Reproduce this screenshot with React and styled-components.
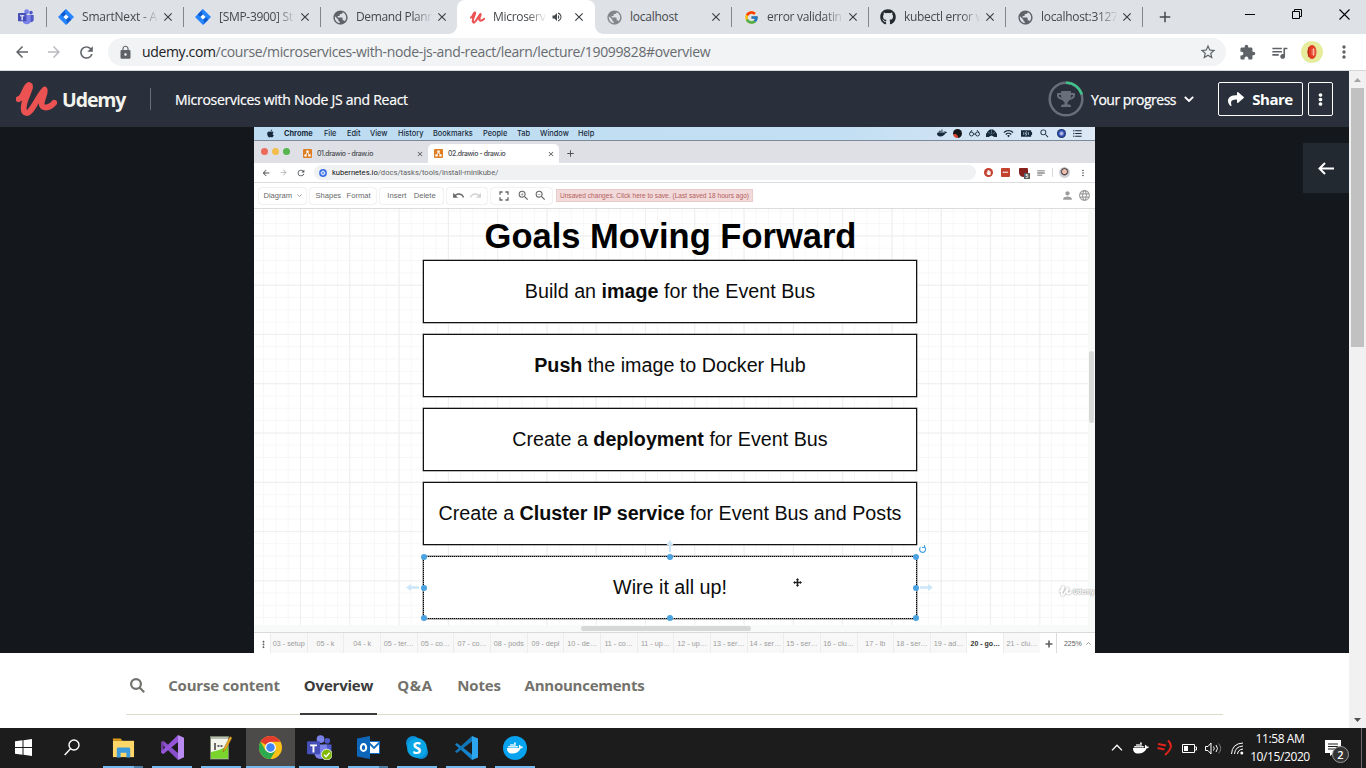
import React from "react";
import styled, { createGlobalStyle, css } from "styled-components";
import { FcGoogle } from "react-icons/fc";
import { FaGithub, FaTrophy, FaShare, FaEllipsisV, FaDocker, FaApple, FaHandPaper } from "react-icons/fa";
import {
  MdPublic, MdVolumeUp, MdClose, MdAdd, MdArrowBack, MdArrowForward, MdRefresh, MdLock, MdStarBorder,
  MdExtension, MdQueueMusic, MdMoreVert, MdUndo, MdRedo, MdFullscreen, MdZoomIn, MdZoomOut, MdPerson,
  MdLanguage, MdWifi, MdSearch, MdNotes, MdFormatListBulleted,
} from "react-icons/md";

const UI = '"Open Sans", "Noto Sans", sans-serif';
const HELV = '"Liberation Sans", Arial, sans-serif';

const Global = createGlobalStyle`
  * { box-sizing: border-box; }
  body { margin: 0; background: #fff; font-family: ${UI}; overflow: hidden; }
  svg { display: block; flex: none; }
`;

const Screen = styled.div`
  width: 1366px;
  height: 768px;
  display: flex;
  flex-direction: column;
  overflow: hidden;
`;

/* ---------- Browser chrome ---------- */
const TabStrip = styled.div`
  height: 34px;
  flex: none;
  display: flex;
  background: #dee1e6;
  color: #45494d;
`;
const PinnedTab = styled.div`
  width: 46px;
  padding: 9px 0 0 18px;
`;
const Tab = styled.div`
  position: relative;
  width: 137px;
  height: 34px;
  flex: none;
  display: flex;
  align-items: center;
  padding: 0 8px 0 11px;
  ${(p) => p.$divider && css`
    &::before {
      content: "";
      position: absolute;
      left: 0;
      top: 7px;
      width: 1px;
      height: 20px;
      background: #83868b;
    }
  `}
  ${(p) => p.$active && css`
    background: #fff;
    border-radius: 8px 8px 0 0;
    width: 138px;
    margin-right: -1px;
    padding-right: 9px;
    z-index: 1;
    &::before, &::after {
      content: "";
      position: absolute;
      bottom: 0;
      width: 8px;
      height: 8px;
    }
    &::before { left: -8px; background: radial-gradient(circle at 0 0, transparent 7.5px, #fff 8px); }
    &::after { right: -8px; background: radial-gradient(circle at 100% 0, transparent 7.5px, #fff 8px); }
  `}
`;
const TabIcon = styled.span`
  width: 18px;
  margin-right: 7px;
  display: flex;
  justify-content: center;
  color: ${(p) => p.$color || "#5f6368"};
`;
const TabTitle = styled.span`
  flex: 1;
  min-width: 0;
  overflow: hidden;
  white-space: nowrap;
  font-size: 12px;
  line-height: 16px;
  letter-spacing: ${(p) => p.$track || -0.3}px;
  ${(p) => p.$fade && css`mask-image: linear-gradient(90deg, #000 calc(100% - 20px), transparent);`}
`;
const TabClose = styled.span`
  margin-left: 2px;
  color: #3c4043;
`;
const Sound = styled.span`
  margin: 0 7px 0 4px;
`;
const NewTab = styled.div`
  width: 85px;
  padding: 8px 0 0 14px;
  position: relative;
  &::before {
    content: "";
    position: absolute;
    left: 0;
    top: 7px;
    width: 1px;
    height: 20px;
    background: #83868b;
  }
`;
const WindowControls = styled.div`
  flex: 1;
  display: flex;
  padding: 9px 0 0 18px;
  gap: 36px;
`;

const AddressRow = styled.div`
  height: 37px;
  flex: none;
  display: flex;
  align-items: center;
  padding: 0 0 0 13px;
  background: #fff;
  border-bottom: 1px solid #d5d7da;
  color: #5f6368;
`;
const NavButtons = styled.div`
  width: 95px;
  display: flex;
  gap: 14px;
`;
const Omnibox = styled.div`
  width: 1118px;
  height: 28px;
  border-radius: 14px;
  background: #f1f3f4;
  display: flex;
  align-items: center;
  padding: 0 9px 0 10px;
`;
const Url = styled.span`
  flex: 1;
  margin-left: 9px;
  font-size: 14px;
  line-height: 18px;
  letter-spacing: -0.35px;
  color: #686c71;
  white-space: nowrap;
  b { font-weight: 400; color: #202124; }
`;
const BrowserActions = styled.div`
  display: flex;
  align-items: center;
  margin-left: 13px;
`;
const MediaControl = styled.span`
  margin-left: 14px;
`;
const Avatar = styled.div`
  width: 22px;
  height: 22px;
  margin: 0 11px 0 12px;
  border-radius: 50%;
  background: #e6ec9c;
  display: flex;
  align-items: center;
  justify-content: center;
`;

/* ---------- Course page ---------- */
const Viewport = styled.div`
  height: 657px;
  flex: none;
  display: flex;
`;
const Page = styled.div`
  width: 1349px;
  display: flex;
  flex-direction: column;
`;
const Scrollbar = styled.div`
  width: 17px;
  background: #f1f1f1;
  display: flex;
  flex-direction: column;
  align-items: center;
`;
const ScrollArrow = styled.div`
  height: 17px;
  display: flex;
  align-items: center;
`;
const ScrollThumb = styled.div`
  width: 13px;
  height: 259px;
  background: #c1c1c1;
  margin-bottom: auto;
`;
const CourseHeader = styled.header`
  height: 56px;
  flex: none;
  background: #29303b;
  display: flex;
  align-items: center;
  padding: 0 16px;
  color: #fff;
`;
const Brand = styled.div`
  width: 134px;
  display: flex;
  align-items: center;
  color: #f4f4ee;
  font-size: 19.5px;
  font-weight: 700;
  letter-spacing: -1.1px;
  span { margin: 0 0 0 5px; }
`;
const HeaderRule = styled.div`
  width: 1px;
  height: 22px;
  background: #686f7a;
  margin-right: 24px;
`;
const CourseTitle = styled.div`
  flex: 1;
  font-size: 14px;
  letter-spacing: -0.28px;
  padding-top: 1px;
  -webkit-text-stroke: 0.2px #fff;
`;
const Progress = styled.div`
  display: flex;
  align-items: center;
  font-size: 14px;
  letter-spacing: -0.5px;
  -webkit-text-stroke: 0.25px #fff;
  > svg { margin-left: 8px; }
`;
const ProgressRing = styled.div`
  position: relative;
  width: 36px;
  height: 36px;
  margin-right: 7px;
  color: #686f7a;
`;
const Trophy = styled(FaTrophy)`
  position: absolute;
  left: 9px;
  top: 9px;
`;
const OutlineButton = styled.button`
  width: ${(p) => p.$w}px;
  height: 34px;
  margin-left: ${(p) => p.$gap}px;
  padding: 0;
  border: 1px solid #fff;
  border-radius: 2px;
  background: none;
  color: #fff;
  font: 700 15px ${UI};
  letter-spacing: -0.5px;
  display: flex;
  align-items: center;
  justify-content: center;
  gap: 8px;
`;
const Stage = styled.div`
  height: 526px;
  flex: none;
  background: #14171c;
  display: flex;
  padding-left: 254px;
`;
const SidebarToggle = styled.div`
  width: 46px;
  height: 50px;
  margin: 16px 0 0 208px;
  background: #232930;
  display: flex;
  align-items: center;
  justify-content: center;
`;
const CourseTabs = styled.nav`
  height: 62px;
  width: 1097px;
  margin-left: 126px;
  border-bottom: 1px solid #dcdacb;
  display: flex;
  align-items: stretch;
`;
const SearchCell = styled.div`
  width: 38px;
  padding: 25px 0 0 4px;
`;
const CourseTab = styled.div`
  width: ${(p) => p.$w}px;
  margin-right: 16px;
  padding-top: 21px;
  text-align: center;
  white-space: nowrap;
  font-size: 15px;
  line-height: 22px;
  font-weight: 700;
  letter-spacing: ${(p) => p.$track || -0.2}px;
  color: ${(p) => (p.$active ? "#3b3b3b" : "#73726c")};
  margin-bottom: -1px;
  border-bottom: ${(p) => (p.$active ? "2px solid #3b3b3b" : "0")};
`;

/* ---------- Lecture video ---------- */
const Video = styled.div`
  width: 841px;
  height: 526px;
  display: flex;
  flex-direction: column;
  background: #fff;
  font-family: ${HELV};
  overflow: hidden;
`;
const MacBar = styled.div`
  height: 14px;
  flex: none;
  display: flex;
  align-items: center;
  padding: 0 12px 1px;
  background: linear-gradient(90deg, #bddcf1, #c3dff3 70%, #dde8f5);
  border-bottom: 1px solid #7c8a9a;
  color: #172a3c;
  font: 500 7.4px Inter, ${HELV};
`;
const MacMenu = styled.span`
  width: ${(p) => p.$w}px;
  white-space: nowrap;
  font-weight: ${(p) => (p.$bold ? 700 : 500)};
`;
const MacTray = styled.div`
  flex: 1;
  display: flex;
  align-items: center;
  justify-content: flex-end;
  gap: 6.4px;
`;
const Siri = styled.span`
  width: 9px;
  height: 9px;
  border-radius: 50%;
  background: radial-gradient(circle, #d4c6e8 10%, #3659bb 40%, #101f53 75%);
`;
const ObsDot = styled.span`
  width: 9px;
  height: 9px;
  border-radius: 50%;
  background: radial-gradient(circle at 20% 90%, #d5432e 25%, #17171a 32%);
`;
const VTabs = styled.div`
  height: 22px;
  flex: none;
  display: flex;
  align-items: flex-end;
  background: #dee0e5;
`;
const Lights = styled.div`
  width: 43px;
  height: 23px;
  padding: 8px 0 0 7px;
  display: flex;
  gap: 4px;
`;
const Light = styled.i`
  width: 7px;
  height: 7px;
  border-radius: 50%;
  background: ${(p) => p.$c};
`;
const VTab = styled.div`
  width: 131px;
  height: 19px;
  display: flex;
  align-items: center;
  gap: 5px;
  padding: 0 4px 0 6px;
  border-radius: 5px 5px 0 0;
  background: ${(p) => (p.$active ? "#fff" : "transparent")};
  font: 500 6.9px Inter, ${HELV};
  letter-spacing: -0.35px;
  color: #4a4d52;
  span { flex: 1; }
`;
const VAddress = styled.div`
  height: 20px;
  flex: none;
  display: flex;
  align-items: center;
  padding: 0 0 0 7px;
  border-bottom: 1px solid #dadcdd;
  color: #4d5054;
  gap: 8px;
`;
const VOmnibox = styled.div`
  width: 662px;
  height: 15px;
  flex: none;
  display: flex;
  align-items: center;
  gap: 5px;
  padding-left: 5px;
  border-radius: 8px;
  background: #f0f1f3;
  font: 400 7.6px Roboto, ${HELV};
  color: #606266;
  b { font-weight: 400; color: #111214; }
`;
const VExtensions = styled.div`
  display: flex;
  align-items: center;
  gap: 8px;
`;
const Badge = styled.span`
  width: 9px;
  height: 9px;
  background: #c4402e;
  border-radius: ${(p) => (p.$round ? "50%" : "1px")};
  color: #fff;
  font: 700 5px/9px ${HELV};
  display: flex;
  align-items: center;
  justify-content: center;
`;
const Shield = styled.span`
  position: relative;
  width: 9px;
  height: 9px;
  margin-left: 1px;
  border-radius: 1px 1px 5px 5px;
  background: #85201c;
  &::after {
    content: "5";
    position: absolute;
    left: 5px;
    top: 5px;
    width: 6px;
    height: 6px;
    background: #5b5d5f;
    color: #fff;
    font: 700 5px/6px ${HELV};
    text-align: center;
  }
`;
const Divider = styled.i`
  width: 1px;
  height: 9px;
  margin: 0 -2px;
  background: #d7d8da;
`;
const Portrait = styled.span`
  width: 11px;
  height: 11px;
  border-radius: 50%;
  background: radial-gradient(circle at 50% 42%, #e9bfb0 25%, #4a3638 33%, #cfd3d8 52%);
`;
const DrawBar = styled.div`
  height: 26px;
  flex: none;
  display: flex;
  align-items: center;
  padding: 0 4px 0 5px;
  border-bottom: 1px solid #dcdcdc;
  color: #686868;
  font-size: 7.6px;
`;
const DrawGroup = styled.div`
  width: ${(p) => p.$w}px;
  height: 16px;
  margin-right: 4px;
  border-radius: 2px;
  box-shadow: 0 0 1.5px #bcbcbc;
  display: flex;
  align-items: center;
  justify-content: space-evenly;
`;
const Notice = styled.div`
  height: 13px;
  width: 197px;
  flex: none;
  background: #f1dad9;
  border: 1px solid #e9cbca;
  color: #b4605e;
  font-size: 6.6px;
  line-height: 11px;
  text-align: center;
  white-space: nowrap;
`;
const AccountIcons = styled.div`
  margin-left: auto;
  display: flex;
  align-items: center;
  gap: 4px;
  color: #9c9c9c;
`;
const CanvasArea = styled.div`
  height: 424px;
  flex: none;
  display: grid;
  grid-template: 416px 8px / 834px 7px;
  background: #f8f9f9;
  border-bottom: 1px solid #dadada;
`;
const Canvas = styled.div`
  display: flex;
  flex-direction: column;
  align-items: center;
  padding-right: 2px;
  background-color: #fff;
  background-image:
    linear-gradient(90deg, #eeeeee 1px, transparent 1px),
    linear-gradient(#eeeeee 1px, transparent 1px),
    linear-gradient(90deg, #f7f7f7 1px, transparent 1px),
    linear-gradient(#f7f7f7 1px, transparent 1px);
  background-size: 49.3px 49.3px, 49.3px 49.3px, 12.325px 12.325px, 12.325px 12.325px;
  background-position: 46px 26.4px;
`;
const Heading = styled.h1`
  height: 51px;
  flex: none;
  margin: 0;
  padding: 6px 0 0 1px;
  font-size: 34.5px;
  line-height: 43px;
  font-weight: 700;
  color: #000;
  white-space: nowrap;
`;
const Goals = styled.div`
  flex: none;
`;
const Goal = styled.div`
  position: relative;
  width: 494px;
  height: 63px;
  margin-bottom: 11px;
  flex: none;
  background: #fff;
  border: 1px solid #111;
  box-shadow: 0 0 0 0.5px #777;
  ${(p) => p.$selected && css`
    border: 1px solid #8a8a8a;
    outline: 1px dotted #000;
    outline-offset: -1px;
  `}
  display: flex;
  align-items: center;
  justify-content: center;
  padding-bottom: 1px;
  font-size: 19.72px;
  color: #0c0c0c;
  white-space: pre;
`;
const Handle = styled.i`
  position: absolute;
  width: 6px;
  height: 6px;
  margin: -3px;
  border-radius: 50%;
  background: #4aa3e0;
  left: ${(p) => p.$x}%;
  top: ${(p) => p.$y}%;
`;
const Overlay = styled.span`
  position: absolute;
  left: ${(p) => p.$x}px;
  top: ${(p) => p.$y}px;
`;
const Watermark = styled.span`
  position: absolute;
  left: 635px;
  top: 29px;
  display: flex;
  align-items: center;
  gap: 1px;
  color: #fff;
  font: 700 6.5px ${UI};
  letter-spacing: -0.4px;
  text-shadow: 0 0 2px #8a8a8a, 0 0 1px #999;
  svg { filter: drop-shadow(0 0 1px #999); }
`;
const VScroll = styled.div`
  padding: 142px 0 0 1px;
  &::before {
    content: "";
    display: block;
    width: 5px;
    height: 72px;
    border-radius: 3px;
    background: #d8d9d9;
  }
`;
const HScroll = styled.div`
  padding: 1px 0 0 327px;
  &::before {
    content: "";
    display: block;
    width: 170px;
    height: 5px;
    border-radius: 3px;
    background: #d6d7d7;
  }
`;
const SheetBar = styled.div`
  height: 20px;
  flex: none;
  display: flex;
  color: #606060;
  font-size: 7.5px;
  line-height: 21px;
`;
const SheetMenu = styled.div`
  width: 16px;
  padding: 6px 0 0 4px;
`;
const Sheet = styled.div`
  width: 36.67px;
  flex: none;
  text-align: center;
  background: ${(p) => (p.$active ? "#fff" : "#f8f8f8")};
  border-left: 1px solid #ececec;
  color: ${(p) => (p.$active ? "#333" : "#9b9b9b")};
  font-weight: ${(p) => (p.$active ? 700 : 400)};
  font-size: ${(p) => (p.$active ? 7 : 7.2)}px;
  white-space: nowrap;
`;
const SheetAdd = styled.div`
  width: 17px;
  padding: 7px 0 0 5px;
  border-right: 1px solid #dcdcdc;
`;
const Zoom = styled.div`
  flex: 1;
  display: flex;
  align-items: center;
  justify-content: center;
  gap: 4px;
  padding: 1px 0 0 3px;
  font-size: 7px;
`;

/* ---------- Taskbar ---------- */
const Taskbar = styled.footer`
  height: 40px;
  flex: none;
  display: flex;
  background: #1d1c1c;
  color: #fff;
`;
const TaskSlot = styled.div`
  width: ${(p) => p.$w || 49}px;
  height: 40px;
  display: flex;
  align-items: center;
  justify-content: center;
  padding: 0 ${(p) => p.$inset || 1}px 1px 0;
`;
const TaskApp = styled(TaskSlot)`
  position: relative;
  background: ${(p) => (p.$active ? "#4c4b4a" : "transparent")};
  &::after {
    content: "";
    position: absolute;
    bottom: 0;
    left: ${(p) => (p.$active ? 0 : 4)}px;
    right: ${(p) => (p.$active ? 0 : 5)}px;
    height: 2px;
    background: ${(p) => (p.$stack ? "linear-gradient(90deg, #76b9ed 31px, #4d7ea6 31px)" : "#76b9ed")};
  }
`;
const Tray = styled.div`
  margin-left: auto;
  display: flex;
  align-items: center;
`;
const TrayItem = styled.div`
  width: 24.2px;
  display: flex;
  justify-content: center;
`;
const Clock = styled.div`
  width: 62px;
  text-align: center;
  font-size: 12px;
  line-height: 18px;
  letter-spacing: -0.4px;
  white-space: nowrap;
  padding-bottom: 1px;
  margin: 0 1px 0 -1px;
`;
const Notifications = styled.div`
  position: relative;
  width: 49px;
  padding-left: 13px;
`;
const Count = styled.span`
  position: absolute;
  left: 20px;
  top: 6px;
  width: 17px;
  height: 17px;
  border-radius: 50%;
  border: 1px solid #999;
  background: #333;
  font-size: 11px;
  font-weight: 600;
  line-height: 15px;
  text-align: center;
`;
const DesktopEdge = styled.div`
  width: 5px;
  height: 40px;
  border-left: 1px solid #6a6a6a;
`;

/* ---------- Drawings ---------- */
const Jira = () => (
  <svg width="16" height="16" viewBox="0 0 16 16">
    <path d="M8 0l8 8-8 8-8-8z" fill="#2684ff" />
    <path d="M8 0c-1.6 2-1.4 3.8 0 5.3L5.3 8 2.6 5.4zM8 16c1.6-2 1.4-3.8 0-5.3L10.7 8l2.7 2.6z" fill="#0f5bd0" />
    <path d="M8 5.4L10.6 8 8 10.6 5.4 8z" fill="#fff" />
  </svg>
);
const Teams = ({ size = 16, check }) => (
  <svg width={size} height={size} viewBox="0 0 24 24">
    <circle cx="19.5" cy="5.5" r="2.7" fill="#5059c9" />
    <circle cx="13" cy="4" r="3.7" fill="#7b83eb" />
    <path d="M16 9h7.5v7a4 4 0 0 1-5.5 3.6z" fill="#5059c9" />
    <path d="M7 9h12v8a6 6 0 0 1-12 0z" fill="#7b83eb" />
    <rect x="0" y="6" width="12.5" height="12.5" rx="1" fill="#464eb8" />
    <path d="M3 9.2h6.5v1.7H7.1v6H5.3v-6H3z" fill="#fff" />
    {check && (
      <>
        <circle cx="19" cy="18.8" r="5.2" fill="#80b900" stroke="#f5f5f5" strokeWidth=".8" />
        <path d="M16.4 19l1.9 1.9 3.4-3.9" fill="none" stroke="#fff" strokeWidth="1.4" />
      </>
    )}
  </svg>
);
const UdemyMark = ({ w = 41, h = 34, color = "#ec5252" }) => (
  <svg width={w} height={h} viewBox="0 0 41 34">
    <path
      d="M2.6 17.2C8 16 8.5 5 13 3c3.4 1.2-2.5 10-4.6 18C7 27 7.6 30.5 10.6 31 16 31 22 14 28.6 7.6c1.6 1.8-2.4 8.4-2.9 13.2-.3 3.2 1.2 4.7 4 4.7 3.6 0 6-1.6 8.6-4.8"
      fill="none" stroke={color} strokeWidth="5.8" strokeLinecap="round" strokeLinejoin="round"
    />
  </svg>
);
const Diagram = () => (
  <svg width="9" height="9" viewBox="0 0 9 9">
    <rect width="9" height="9" rx="1" fill="#df7e23" />
    <path d="M4.5 3L2.5 6.2M4.5 3l2 3.2" stroke="#fff" strokeWidth=".8" />
    <path d="M3.3 1.5h2.4v2H3.3zM1.3 5.5h2.4v2H1.3zM5.3 5.5h2.4v2H5.3z" fill="#fff" />
  </svg>
);
const Helm = () => (
  <svg width="8" height="8" viewBox="0 0 9 9">
    <circle cx="4.5" cy="4.5" r="4.4" fill="#3970e4" />
    <circle cx="4.5" cy="4.5" r="2" fill="none" stroke="#fff" strokeWidth=".9" />
    <path d="M4.5 1.5v6M1.5 4.5h6" stroke="#fff" strokeWidth=".4" />
  </svg>
);
const Chevron = ({ w = 10, up, sw = 1.6 }) => (
  <svg width={w} height={w * 0.6} viewBox="0 0 10 6">
    <path d={up ? "M.8 5.3L5 1l4.2 4.3" : "M.8.8L5 5 9.2.8"} fill="none" stroke="currentColor" strokeWidth={sw} />
  </svg>
);
const Arrow = ({ flip }) => (
  <svg width="13" height="7" viewBox="0 0 13 7">
    <path d={flip ? "M0 3.5L5 0v2.3h8v2.4H5V7z" : "M13 3.5L8 0v2.3H0v2.4h8V7z"} fill="#cbe6f8" />
  </svg>
);
const Explorer = () => (
  <svg width="23" height="22" viewBox="0 0 24 22">
    <path d="M1 1h8l2 2.5H1z" fill="#e19e14" />
    <path d="M1 3.5h22v17H1z" fill="#ffd667" />
    <path d="M5 12a1.5 1.5 0 0 1 1.5-1.5h11A1.5 1.5 0 0 1 19 12v9h-4v-5H9v5H5z" fill="#3d9bdc" />
  </svg>
);
const VisualStudio = () => (
  <svg width="25" height="25" viewBox="0 0 25 25">
    <path d="M3.5 6L18 18V25L1 8.2V7z" fill="#8a4fcb" />
    <path d="M1 7l2.5-1v13L1 17.5z" fill="#70409f" />
    <path d="M3.5 19L18 7V0L1 16.5v1z" fill="#9455d8" />
    <path d="M18 0l6 2.7v19.6L18 25z" fill="#b98af2" />
  </svg>
);
const Notepad = () => (
  <svg width="24" height="25" viewBox="0 0 24 25">
    <rect x="1.5" y="1.5" width="18" height="22.5" fill="#f4f6ee" stroke="#77806c" />
    <path d="M2 17c6-1 11-3 17-6v12.5H2z" fill="#79d52c" />
    <path d="M2 2h17v2H2z" fill="#b8bdb0" />
    <path d="M6 8v7M8.5 11h2M11.5 11h2" stroke="#333" strokeWidth="1.4" />
    <path d="M14 17l1-4L21 1.5l2 1.3L17 14z" fill="#efad26" stroke="#88601a" strokeWidth=".5" />
  </svg>
);
const ChromeLogo = () => (
  <svg width="23" height="23" viewBox="0 0 24 24">
    <circle cx="12" cy="12" r="12" fill="#fbc116" />
    <path d="M12 12L1.6 6A12 12 0 0 1 22.4 6H12z" fill="#e33b2e" />
    <path d="M1.6 6A12 12 0 0 0 12 24l5.2-9L12 12 6.8 15z" fill="#2da94f" />
    <circle cx="12" cy="12" r="5.7" fill="#fff" />
    <circle cx="12" cy="12" r="4.4" fill="#4285f4" />
  </svg>
);
const Outlook = () => (
  <svg width="23" height="23" viewBox="0 0 23 23">
    <path d="M11 5.5h11.5v12H11z" fill="#fff" stroke="#0f6fc6" />
    <path d="M12 7l5 5 6-6" fill="none" stroke="#0f6fc6" strokeWidth="1.8" />
    <path d="M0 2.5L13 0v23L0 20.5z" fill="#0c67bb" />
    <ellipse cx="6.5" cy="11.5" rx="2.7" ry="3.5" fill="none" stroke="#fff" strokeWidth="2" />
  </svg>
);
const SkypeGlyph = styled.span`
  position: relative;
  width: 22px;
  height: 23px;
  display: flex;
  align-items: center;
  justify-content: center;
  font: 700 16px/20px ${UI};
  &::before, &::after {
    content: "";
    position: absolute;
    width: 14px;
    height: 14px;
    border-radius: 50%;
    background: #0a8fd8;
    z-index: 0;
  }
  &::before { left: 0; top: 0; }
  &::after { right: 0; bottom: 0; }
  span {
    position: relative;
    z-index: 1;
    width: 20px;
    height: 20px;
    border-radius: 50%;
    background: #0aa5e4;
    text-align: center;
  }
`;
const Code = () => (
  <svg width="24" height="24" viewBox="0 0 24 24">
    <path d="M1 8.5L2.8 7 18 18.5V24z" fill="#1583c9" />
    <path d="M1 15.5L2.8 17 18 5.5V0z" fill="#1275b8" />
    <path d="M18 0l6 2.5v19L18 24z" fill="#2ba5ed" />
  </svg>
);
const DockerDisc = styled.span`
  width: 24px;
  height: 24px;
  border-radius: 50%;
  background: #07a3ee;
  display: flex;
  align-items: center;
  justify-content: center;
`;

const tabs = [
  { icon: <Jira />, title: "SmartNext - A", fade: true, divider: true, track: -0.2 },
  { icon: <Jira />, title: "[SMP-3900] St", fade: true, divider: true },
  { icon: <MdPublic size={17} />, title: "Demand Plann", fade: true, divider: true, track: -0.36 },
  { icon: <UdemyMark w={15} h={13} />, title: "Microserv", fade: true, active: true },
  { icon: <MdPublic size={17} />, title: "localhost", color: "#848689", track: -0.25 },
  { icon: <FcGoogle size={15} />, title: "error validatin", fade: true, divider: true },
  { icon: <FaGithub size={16} />, title: "kubectl error v", fade: true, divider: true, color: "#24292e" },
  { icon: <MdPublic size={17} />, title: "localhost:3127", fade: true, divider: true },
];
const macMenus = [["File", 23], ["Edit", 23], ["View", 28], ["History", 35], ["Bookmarks", 50], ["People", 34], ["Tab", 23], ["Window", 38], ["Help", 30]];
const sheets = [
  "03 - setup", "05 - k", "04 - k", "05 - ter…", "05 - co…", "07 - co…", "08 - pods", "09 - depl", "10 - de…",
  "11 - co…", "11 - up…", "12 - up…", "13 - ser…", "14 - ser…", "15 - ser…", "16 - clu…", "17 - lb", "18 - ser…",
  "19 - ad…", "20 - go…", "21 - clu…",
];
const handles = [[0, 0], [50, 0], [100, 0], [0, 50], [100, 50], [0, 100], [50, 100], [100, 100]];

function Browser() {
  return (
    <>
      <TabStrip>
        <PinnedTab><Teams /></PinnedTab>
        {tabs.map((t, i) => (
          <Tab key={i} $active={t.active} $divider={t.divider}>
            <TabIcon $color={t.color}>{t.icon}</TabIcon>
            <TabTitle $fade={t.fade} $track={t.track}>{t.title}</TabTitle>
            {t.active && <Sound><MdVolumeUp size={12} /></Sound>}
            <TabClose><MdClose size={14} /></TabClose>
          </Tab>
        ))}
        <NewTab><MdAdd size={18} /></NewTab>
        <WindowControls>
          <svg width="11" height="11"><path d="M0 5.5h10" stroke="#000" /></svg>
          <svg width="11" height="11"><path d="M.5 2.5h7v7h-7zM2.5 2.5v-2h7v7h-2" fill="none" stroke="#000" /></svg>
          <svg width="11" height="11"><path d="M.5.5l10 10M10.5.5l-10 10" stroke="#000" strokeWidth="1.1" /></svg>
        </WindowControls>
      </TabStrip>
      <AddressRow>
        <NavButtons>
          <MdArrowBack size={18} />
          <MdArrowForward size={18} color="#b9bbbe" />
          <MdRefresh size={19} />
        </NavButtons>
        <Omnibox>
          <MdLock size={15} />
          <Url><b>udemy.com</b>/course/microservices-with-node-js-and-react/learn/lecture/19099828#overview</Url>
          <MdStarBorder size={18} />
        </Omnibox>
        <BrowserActions>
          <MdExtension size={17} />
          <MediaControl><MdQueueMusic size={19} /></MediaControl>
          <Avatar>
            <svg width="10" height="16" viewBox="0 0 10 16">
              <ellipse cx="5" cy="8" rx="4.5" ry="7" fill="#e23b22" />
              <path d="M6.5 4v8M4.5 6h4M4.5 8h4M4.5 10h4" stroke="#ffc5b2" strokeWidth=".8" />
              <path d="M2 3q-2 5 0 10" stroke="#a5260f" fill="none" />
            </svg>
          </Avatar>
          <MdMoreVert size={20} />
        </BrowserActions>
      </AddressRow>
    </>
  );
}

function Lecture() {
  return (
    <Video>
      <MacBar>
        <MacMenu $w={18}><FaApple size={9} /></MacMenu>
        <MacMenu $w={40} $bold>Chrome</MacMenu>
        {macMenus.map(([m, w]) => <MacMenu key={m} $w={w}>{m}</MacMenu>)}
        <MacTray>
          <FaDocker size={10} />
          <ObsDot />
          <svg width="11" height="8" viewBox="0 0 11 8" fill="none" stroke="currentColor" strokeWidth=".9">
            <circle cx="2.5" cy="5" r="2" /><circle cx="8.5" cy="5" r="2" /><path d="M1 4l2-3M10 4L8 1M4.5 5h2" />
          </svg>
          <svg width="11" height="8" viewBox="0 0 11 8"><path d="M0 8V5l2-3 2-1.5h3L9 2l2 3v3H8.5L5.5 6.5 2.5 8z" fill="currentColor" /><path d="M5.5 5V1M4.5 5L2 3M6.5 5L9 3" stroke="#8fabbf" strokeWidth=".5" /></svg>
          <MdWifi size={11} />
          <svg width="12" height="7" viewBox="0 0 13 7"><path d="M0 0h11v2h1v3h-1v2H0z" fill="currentColor" /><path d="M3 2v3M8 2v3M6 1L4.8 3.8h1.4L5.2 6" stroke="#c8e1f3" fill="none" strokeWidth=".8" /></svg>
          <MdSearch size={11} />
          <Siri />
          <MdFormatListBulleted size={11} />
        </MacTray>
      </MacBar>
      <VTabs>
        <Lights><Light $c="#ec6a5c" /><Light $c="#f3bd4e" /><Light $c="#55b54f" /></Lights>
        <VTab><Diagram /><span>01.drawio - draw.io</span><MdClose size={8} /></VTab>
        <VTab $active><Diagram /><span>02.drawio - draw.io</span><MdClose size={8} /></VTab>
        <VTab><MdAdd size={11} /></VTab>
      </VTabs>
      <VAddress>
        <MdArrowBack size={10} />
        <MdArrowForward size={9} color="#b0b2b5" />
        <MdRefresh size={10} />
        <VOmnibox><Helm /><span><b>kubernetes.io</b>/docs/tasks/tools/install-minikube/</span></VOmnibox>
        <VExtensions>
          <Badge $round><FaHandPaper size={5} /></Badge>
          <Badge>•••</Badge>
          <Shield />
          <MdNotes size={10} />
          <Divider />
          <Portrait />
          <MdMoreVert size={10} />
        </VExtensions>
      </VAddress>
      <DrawBar>
        <DrawGroup $w={47}>Diagram<Chevron w={5} sw={1.2} /></DrawGroup>
        <DrawGroup $w={66}><span>Shapes</span><span>Format</span></DrawGroup>
        <DrawGroup $w={63}><span>Insert</span><span>Delete</span></DrawGroup>
        <DrawGroup $w={40}><MdUndo size={13} /><MdRedo size={13} color="#d2d2d2" /></DrawGroup>
        <DrawGroup $w={61}><MdFullscreen size={16} /><MdZoomIn size={13} /><MdZoomOut size={13} /></DrawGroup>
        <Notice>Unsaved changes. Click here to save. (Last saved 18 hours ago)</Notice>
        <AccountIcons><MdPerson size={13} /><MdLanguage size={13} /></AccountIcons>
      </DrawBar>
      <CanvasArea>
        <Canvas>
          <Heading>Goals Moving Forward</Heading>
          <Goals>
            <Goal>Build an <b>image</b> for the Event Bus</Goal>
            <Goal><b>Push</b> the image to Docker Hub</Goal>
            <Goal>Create a <b>deployment</b> for Event Bus</Goal>
            <Goal>Create a <b>Cluster IP service</b> for Event Bus and Posts</Goal>
            <Goal $selected>
              Wire it all up!
              {handles.map(([x, y]) => <Handle key={`${x}-${y}`} $x={x} $y={y} />)}
              <Overlay $x={-18} $y={27}><Arrow flip /></Overlay>
              <Overlay $x={496} $y={27}><Arrow /></Overlay>
              <Overlay $x={242} $y={-17}>
                <svg width="8" height="12"><path d="M4 0l3.5 5H5v7H3V5H.5z" fill="#cbe6f8" /></svg>
              </Overlay>
              <Overlay $x={494} $y={-12}>
                <svg width="9" height="9" viewBox="0 0 9 9"><path d="M2.5 2.2A3 3 0 1 0 6.5 2M6.5 0v2.5H4" fill="none" stroke="#4aa3e0" strokeWidth="1.2" /></svg>
              </Overlay>
              <Overlay $x={369} $y={21}>
                <svg width="9" height="9" viewBox="0 0 9 9"><path d="M4.5 1v7M1 4.5h7" stroke="#222" strokeWidth="1.6" /><path d="M4.5 0L6 2H3zM4.5 9L6 7H3zM0 4.5L2 3v3zM9 4.5L7 3v3z" fill="#222" /></svg>
              </Overlay>
              <Watermark><UdemyMark w={13} h={10} color="#fff" />Udemy</Watermark>
            </Goal>
          </Goals>
        </Canvas>
        <VScroll />
        <HScroll />
      </CanvasArea>
      <SheetBar>
        <SheetMenu><MdMoreVert size={11} /></SheetMenu>
        {sheets.map((s, i) => <Sheet key={i} $active={i === 19}>{s}</Sheet>)}
        <SheetAdd>
          <svg width="8" height="8" viewBox="0 0 8 8"><path d="M4 .5v7M.5 4h7" stroke="#606060" strokeWidth="1.6" /></svg>
        </SheetAdd>
        <Zoom>225%<Chevron up w={5} sw={1.2} /></Zoom>
      </SheetBar>
    </Video>
  );
}

function Course() {
  return (
    <Viewport>
      <Page>
        <CourseHeader>
          <Brand><UdemyMark /><span>Udemy</span></Brand>
          <HeaderRule />
          <CourseTitle>Microservices with Node JS and React</CourseTitle>
          <Progress>
            <ProgressRing>
              <svg width="36" height="36" viewBox="0 0 36 36" fill="none" strokeWidth="2.5">
                <circle cx="18" cy="18" r="16.3" stroke="#686f7a" />
                <path d="M18 1.7A16.3 16.3 0 0 1 33.8 13.5" stroke="#42c08a" />
              </svg>
              <Trophy size={18} />
            </ProgressRing>
            Your progress
            <Chevron sw={1.9} />
          </Progress>
          <OutlineButton $w={85} $gap={24}><FaShare size={16} />Share</OutlineButton>
          <OutlineButton $w={25} $gap={5}><FaEllipsisV size={13} /></OutlineButton>
        </CourseHeader>
        <Stage>
          <Lecture />
          <SidebarToggle>
            <svg width="17" height="13" viewBox="0 0 17 13"><path d="M7 1L1.5 6.5 7 12M1.5 6.5H16" fill="none" stroke="#fff" strokeWidth="2" /></svg>
          </SidebarToggle>
        </Stage>
        <CourseTabs>
          <SearchCell>
            <svg width="15" height="15" viewBox="0 0 15 15" fill="none" stroke="#73726c" strokeWidth="2.2"><circle cx="6" cy="6" r="4.9" /><path d="M9.5 9.5l4.7 4.7" /></svg>
          </SearchCell>
          <CourseTab $w={120}>Course content</CourseTab>
          <CourseTab $w={77} $active>Overview</CourseTab>
          <CourseTab $w={44} $track={0.6}>Q&amp;A</CourseTab>
          <CourseTab $w={52}>Notes</CourseTab>
          <CourseTab $w={127} $track={-0.25}>Announcements</CourseTab>
        </CourseTabs>
      </Page>
      <Scrollbar>
        <ScrollArrow><svg width="7" height="4"><path d="M0 4l3.5-4L7 4z" fill="#a3a3a3" /></svg></ScrollArrow>
        <ScrollThumb />
        <ScrollArrow><svg width="7" height="4"><path d="M0 0l3.5 4L7 0z" fill="#505050" /></svg></ScrollArrow>
      </Scrollbar>
    </Viewport>
  );
}

function WindowsBar() {
  return (
    <Taskbar>
      <TaskSlot $w={48}>
        <svg width="17" height="17" viewBox="0 0 17 17" fill="#fff"><path d="M0 2.3l7.5-1V8H0zM8.5 1.2L17 0v8H8.5zM0 9h7.5v6.7L0 14.7zM8.5 9H17v8l-8.5-1.2z" /></svg>
      </TaskSlot>
      <TaskSlot $w={51} $inset={4}>
        <svg width="16" height="17" viewBox="0 0 16 17" fill="none" stroke="#fff" strokeWidth="1.4"><circle cx="10" cy="6" r="5" /><path d="M6.5 9.7L.7 16" /></svg>
      </TaskSlot>
      <TaskApp $stack><Explorer /></TaskApp>
      <TaskApp><VisualStudio /></TaskApp>
      <TaskApp><Notepad /></TaskApp>
      <TaskApp $active><ChromeLogo /></TaskApp>
      <TaskApp><Teams size={25} check /></TaskApp>
      <TaskApp $stack><Outlook /></TaskApp>
      <TaskApp><SkypeGlyph><span>S</span></SkypeGlyph></TaskApp>
      <TaskApp><Code /></TaskApp>
      <TaskApp><DockerDisc><FaDocker size={16} /></DockerDisc></TaskApp>
      <Tray>
        <TrayItem><Chevron up w={12} sw={1.1} /></TrayItem>
        <TrayItem><FaDocker size={16} /></TrayItem>
        <TrayItem>
          <svg width="16" height="16" viewBox="0 0 16 16" fill="none" stroke="#e0231a" strokeWidth="2"><path d="M1 4l8 1.5M.5 8l7 1.5M11 .5q7 6-3 14.5" /></svg>
        </TrayItem>
        <TrayItem>
          <svg width="15" height="9"><path d="M.5.5h12v8H.5zM12.5 3h2v3h-2" fill="none" stroke="#fff" /><path d="M2 2h4v5H2z" fill="#fff" /></svg>
        </TrayItem>
        <TrayItem>
          <svg width="17" height="13" viewBox="0 0 17 13" fill="none" stroke="#fff"><path d="M.5 4.5h2.5l3-3.5v11l-3-3.5H.5zM8.5 4.5q1.5 2 0 4M11 3q3 3.5 0 7" /><path d="M13.5 1.5q4.5 5 0 10" stroke="#777" /></svg>
        </TrayItem>
        <TrayItem>
          <svg width="13" height="13" viewBox="0 0 13 13" fill="none" stroke="#fff"><path d="M.5 12Q1 1.5 12 1M3.5 12Q4 4.5 12 4M6.5 12Q7 7.5 12 7" /><circle cx="10.8" cy="11" r="1.5" fill="#fff" stroke="none" /></svg>
        </TrayItem>
        <Clock>11:58 AM<br />10/15/2020</Clock>
        <Notifications>
          <svg width="17" height="17" viewBox="0 0 17 17"><path d="M0 0h16v13H9l-4 3v-3H0z" fill="#fff" /><path d="M3 4h10M3 6.5h10M3 9h7" stroke="#1d1c1c" /></svg>
          <Count>2</Count>
        </Notifications>
        <DesktopEdge />
      </Tray>
    </Taskbar>
  );
}

export default function App() {
  return (
    <Screen>
      <Global />
      <Browser />
      <Course />
      <WindowsBar />
    </Screen>
  );
}
